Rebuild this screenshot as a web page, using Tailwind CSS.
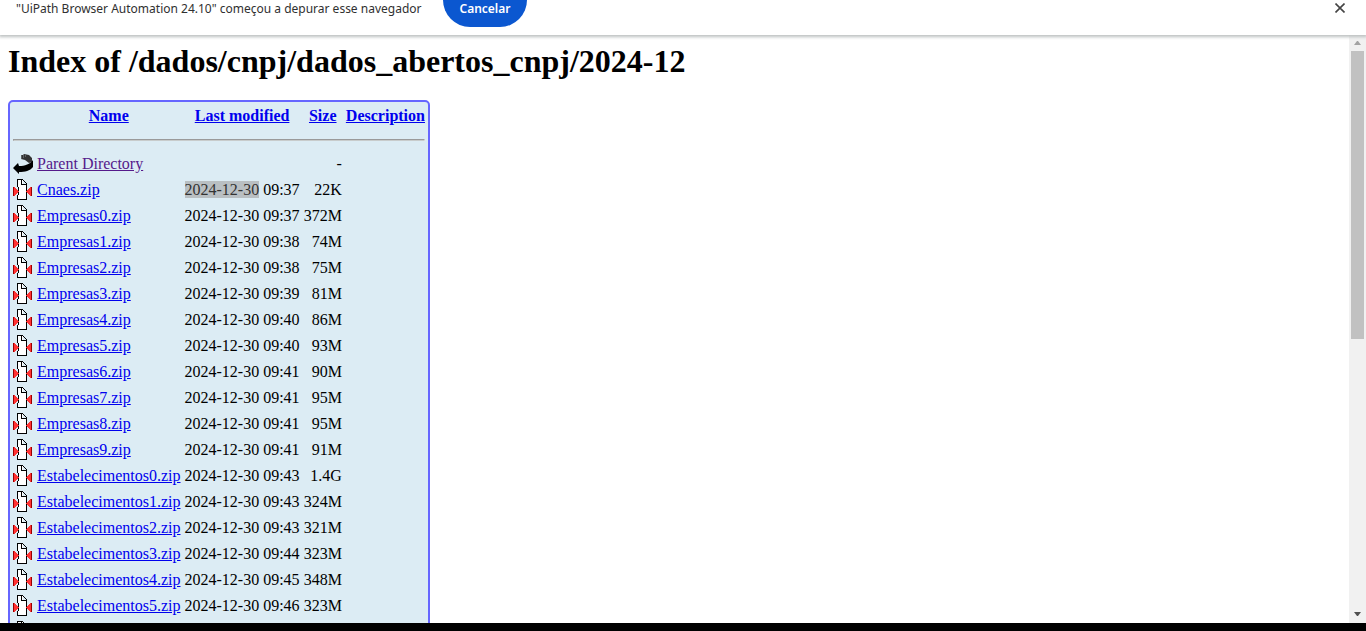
<!DOCTYPE html>
<html lang="pt-BR">
<head>
<meta charset="utf-8">
<title>Index of /dados/cnpj/dados_abertos_cnpj/2024-12</title>
<script src="https://cdn.jsdelivr.net/npm/@tailwindcss/browser@4"></script>
</head>
<body class="flex h-screen flex-col overflow-hidden bg-white">
<svg class="hidden" aria-hidden="true">
  <symbol id="zip" viewBox="0 0 20 22" shape-rendering="crispEdges">
    <path fill="#fff" d="M5 1h5v5h4v14H5z"/>
    <path fill="#000" d="M4 0h6v1H4zM4 1h1v7H4zM5 8h1v8H5zM4 16h1v4H4zM8 1h1v5H8zM9 5h5v1H9zM10 1h1v1h-1zM11 2h1v1h-1zM12 3h1v1h-1zM13 4h1v16h-1zM4 20h10v1H4z"/>
    <path fill="#900" d="M0 8h1v9H0zM18 8h1v9h-1z"/>
    <path fill="#f33" d="M1 8h1v9H1zM2 9h1v7H2zM3 10h1v5H3zM4 11h1v3H4zM5 12h1v1H5zM17 8h1v9h-1zM16 9h1v7h-1zM15 10h1v5h-1zM14 11h1v3h-1zM13 12h1v1h-1z"/>
  </symbol>
</svg>
<header class="z-10 flex h-[35px] shrink-0 items-start bg-white pl-4 shadow-[0_1px_3px_1px_#bcc0c0]">
  <p class="font-['Noto_Sans'] text-xs leading-[18px] text-[#303030]">"UiPath Browser Automation 24.10" começou a depurar esse navegador</p>
  <button class="ml-[22px] h-[27px] rounded-b-full bg-[#0b57d0] px-4 pb-[9px] font-['Noto_Sans'] text-xs leading-[18px] font-semibold text-white">Cancelar</button>
  <button class="mt-[3px] mr-[21px] ml-auto" aria-label="Fechar"><svg class="size-[10px]" viewBox="0 0 10 10" stroke="#444" stroke-width="1.6"><path d="M.5.5l9 9M9.5.5l-9 9"/></svg></button>
</header>
<div class="flex min-h-0 flex-1 font-['Liberation_Serif',serif] text-base leading-[18px] text-black">
  <main class="min-w-0 flex-1 overflow-hidden px-2 pt-2">
    <h1 class="mb-5 text-[32px] leading-[37px] font-bold">Index of /dados/cnpj/dados_abertos_cnpj/2024-12</h1>
    <table class="border-separate border-spacing-[2px] rounded-[5px] border-2 border-[#6666ff] bg-[#dcecf4] whitespace-nowrap [&_a]:text-[#0000ee] [&_a]:underline [&_td]:p-px [&_th]:p-px">
      <thead>
        <tr class="h-6"><th></th><th><a href="#">Name</a></th><th><a href="#">Last modified</a></th><th><a href="#">Size</a></th><th><a href="#">Description</a></th></tr>
        <tr><th colspan="5"><hr class="my-2 h-[2px] border border-t-[#9a9a9a] border-r-[#eee] border-b-[#c8cccc] border-l-[#9a9a9a]"></th></tr>
      </thead>
      <tbody id="files">
        <tr class="h-6">
          <td><svg class="h-[22px] w-5" viewBox="0 0 20 22"><path d="M8 2h2l1-1 5 1 3 3v4l-3 1-4-3V7L8 6z" fill="#333"/><path d="M8 3h1M10 2h1M8 5h1M10 4h1M12 3h1" stroke="#8a9296"/><path d="M0 15l5-5 1 3c6 0 11-2 14-6v7c-3 4-8 5-14 5v2z"/></svg></td>
          <td><a href="#" class="text-[#551a8b]!">Parent Directory</a></td><td></td><td class="text-right">-</td><td></td>
        </tr>
      </tbody>
    </table>
  </main>
  <div class="flex w-[17px] shrink-0 flex-col items-center bg-[#f1f1f1]" aria-hidden="true">
    <svg class="mt-[6px] h-[4px] w-[7px]" viewBox="0 0 7 4" fill="#a3a3a3"><path d="M3 0h1l3 4H0z"/></svg>
    <div class="mt-[6px] h-[49%] w-[13px] bg-[#c1c1c1]"></div>
    <svg class="mt-auto mb-[7px] h-[4px] w-[7px]" viewBox="0 0 7 4" fill="#505050"><path d="M0 0h7L4 4H3z"/></svg>
  </div>
</div>
<footer class="h-2 shrink-0 bg-black"></footer>
<script>
const files = [
  ['Cnaes','09:37','22K'],['Empresas0','09:37','372M'],['Empresas1','09:38','74M'],['Empresas2','09:38','75M'],
  ['Empresas3','09:39','81M'],['Empresas4','09:40','86M'],['Empresas5','09:40','93M'],['Empresas6','09:41','90M'],
  ['Empresas7','09:41','95M'],['Empresas8','09:41','95M'],['Empresas9','09:41','91M'],
  ['Estabelecimentos0','09:43','1.4G'],['Estabelecimentos1','09:43','324M'],['Estabelecimentos2','09:43','321M'],
  ['Estabelecimentos3','09:44','323M'],['Estabelecimentos4','09:45','348M'],['Estabelecimentos5','09:46','323M'],
  ['','','']
];
document.getElementById('files').insertAdjacentHTML('beforeend', files.map(([name, time, size], i) => {
  const day = i ? '2024-12-30' : '<span class="bg-[#b9bfc2] text-[#333]">2024-12-30</span>';
  return `<tr class="h-6"><td><svg class="h-[22px] w-5"><use href="#zip"/></svg></td><td>${name ? `<a href="#">${name}.zip</a>` : ''}</td><td class="text-right">${time ? day + ' ' + time : ''}</td><td class="text-right">${size}</td><td></td></tr>`;
}).join(''));
</script>
</body>
</html>
